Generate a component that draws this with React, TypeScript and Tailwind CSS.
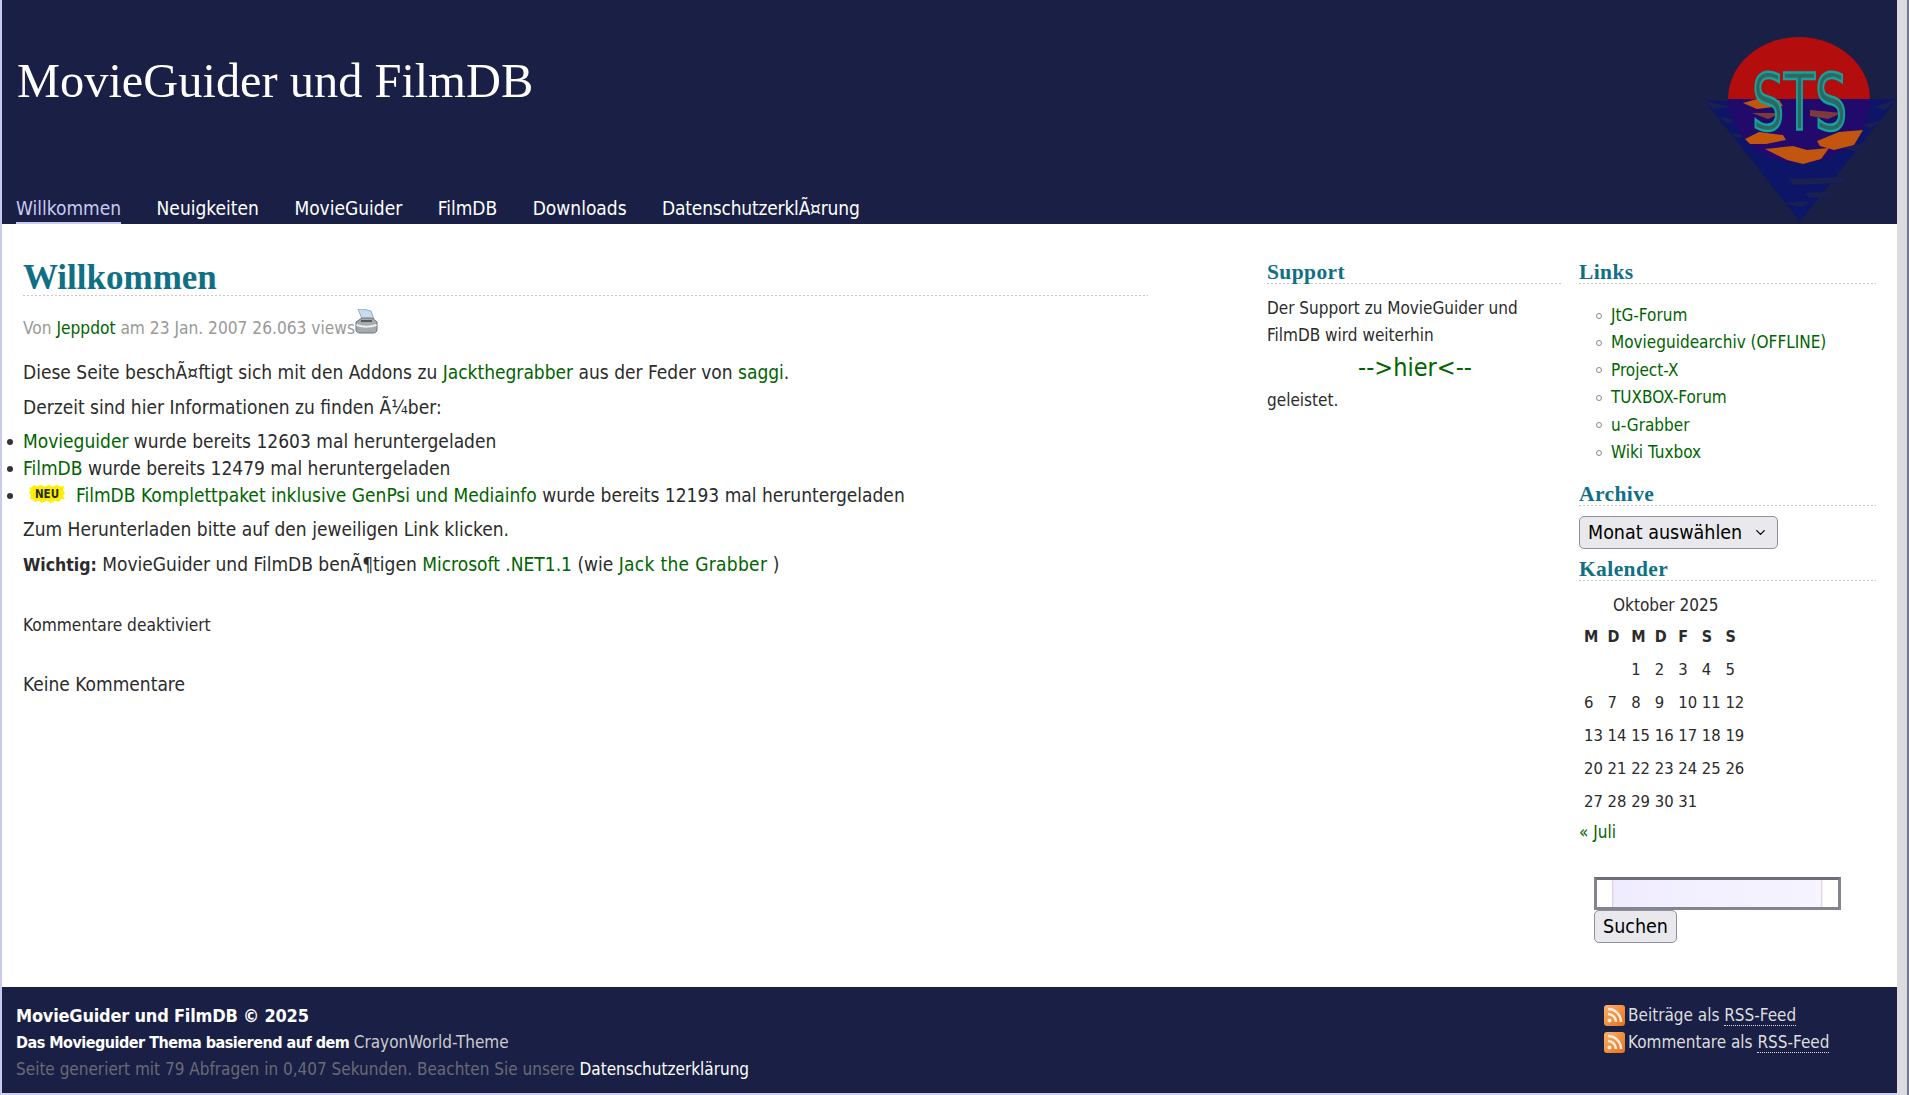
import { ChevronDown } from "lucide-react";

const body = { fontFamily: '"DejaVu Sans", Verdana, sans-serif', fontStretch: "condensed" } as const;

const navItems = ["Willkommen", "Neuigkeiten", "MovieGuider", "FilmDB", "Downloads", "DatenschutzerklÃ¤rung"];
const linkItems = ["JtG-Forum", "Movieguidearchiv (OFFLINE)", "Project-X", "TUXBOX-Forum", "u-Grabber", "Wiki Tuxbox"];
const calendar = [
  ["", "", "1", "2", "3", "4", "5"],
  ["6", "7", "8", "9", "10", "11", "12"],
  ["13", "14", "15", "16", "17", "18", "19"],
  ["20", "21", "22", "23", "24", "25", "26"],
  ["27", "28", "29", "30", "31", "", ""],
];

function Logo() {
  return (
    <svg width="192" height="190" viewBox="0 0 192 190" className="block">
      {/* water triangle, lighter cuts towards the edges */}
      <polygon points="0,68 192,66 100,182 95,188 90,182" fill="#0d1568" />
      <path d="M0 68l26 6-18 2zM14 84l24 3-16 3zM26 100l20 2-14 3zM192 66l-22 8 10 3zM176 88l-20 4 10 3zM160 110l-22 5 12 3zM84 146l60-2-8 6-48 2zM100 160l32-2-8 6-20 1zM78 170l28-2-10 6z" fill="#1a2050" />
      {/* sun */}
      <path d="M23 66a71 62 0 0 1 142 0z" fill="#b30d0d" />
      <path d="M23 66h142c0 12-3 22-9 32-12 18-32 32-62 32-30 0-50-14-60-32-7-10-11-20-11-32z" fill="#22096c" />
      {/* reflections */}
      <path d="M38 70l14-4 22 1 4 6-26 3zM40 106l14-7 24 3 3 5-20 4-16 0zM112 108l22-9 24-2-9 15-20 5-14-4zM60 116l28-3 14 4 22-2-8 11-18 5-16-4-12-6z" fill="#c2560e" />
      <path d="M105 77l32 3-14 6-18-3zM47 80l30 0-14 6z" fill="#7d3a3c" />
      <text x="47" y="97" fontSize="78" fontFamily="'DejaVu Sans'" fill="#2f6765" stroke="#12a39a" strokeWidth="2.600" textLength="95" lengthAdjust="spacingAndGlyphs">STS</text>
    </svg>
  );
}

function Printer() {
  return (
    <svg width="23" height="25" viewBox="0 0 23 25" className="inline-block align-baseline">
      <path d="M3 0h5l8 2 3 8H7z" fill="#c7dcf0" stroke="#7a8ea0" strokeWidth="0.700" />
      <path d="M1 13l6-4h10l5 4v8c0 2-2 3-4 3H5c-2 0-4-1-4-3z" fill="#a6aaae" stroke="#6e7276" />
      <path d="M1.500 16c6 2 14 2 20 0" fill="none" stroke="#eceeef" strokeWidth="2" />
      <path d="M6 12h11" stroke="#4e5155" strokeWidth="1.800" />
    </svg>
  );
}

function NewBadge() {
  return (
    <svg width="36" height="18" viewBox="0 0 36 18" className="mr-[11px] mb-[5px] ml-[6px] inline-block">
      <polygon
        points="0,3 3,2 5,0 8,1.500 12,0 16,1.500 20,0 24,1.500 28,0 31,1.500 35,1 34,5 36,8 34,11 36,14 32,14 30,17 26,15.500 22,18 18,15.500 13,18 10,15.500 6,17 4,14.500 1,14 2,10 0,7 2,5"
        fill="#fcf000"
      />
      <text x="18" y="12.500" textAnchor="middle" fontSize="11.500" fontWeight="700" fill="#2a2a20">NEU</text>
    </svg>
  );
}

function Rss() {
  return (
    <svg width="21" height="21" viewBox="0 0 21 21" className="shrink-0">
      <defs>
        <linearGradient id="rss" x1="0" y1="0" x2="1" y2="1">
          <stop offset="0" stopColor="#fbb26a" />
          <stop offset="1" stopColor="#e8701a" />
        </linearGradient>
      </defs>
      <rect width="21" height="21" rx="3" fill="url(#rss)" />
      <circle cx="5.500" cy="15.500" r="2" fill="#fdeedd" />
      <path d="M4 9a8 8 0 0 1 8 8M4 4a13 13 0 0 1 13 13" fill="none" stroke="#fdeedd" strokeWidth="2.500" />
    </svg>
  );
}

function Dots() {
  return <div className="h-px bg-[linear-gradient(90deg,#c8c8c8_2px,transparent_2px)] bg-[length:4px_1px] bg-repeat-x" />;
}

function WidgetTitle({ children }: { children: React.ReactNode }) {
  return (
    <>
      <h3 className="h-[22px] font-['Liberation_Serif',serif] text-[21.500px] leading-[22px] font-bold tracking-[0.4px] text-[#0f7085]" style={{ fontStretch: "normal" }}>
        {children}
      </h3>
      <Dots />
    </>
  );
}

function A({ children }: { children: React.ReactNode }) {
  return <a className="text-[#006400]">{children}</a>;
}

function Item({ children }: { children: React.ReactNode }) {
  return (
    <li className="flex">
      <span className="flex h-[27px] w-[17px] shrink-0 items-center pl-[1px]">
        <span className="size-[6px] rounded-full bg-[#333]" />
      </span>
      <div>{children}</div>
    </li>
  );
}

function LinkItem({ children }: { children: React.ReactNode }) {
  return (
    <li className="flex h-[27.400px] items-center">
      <span className="mr-[9px] ml-[17px] size-[6px] shrink-0 rounded-full border border-[#888]" />
      <A>{children}</A>
    </li>
  );
}

export default function App() {
  return (
    <div className="flex h-[1095px] w-[1909px] overflow-hidden bg-white text-[#2b2b2b]" style={body}>
      <div className="flex w-[1897px] flex-col border-l-2 border-[#c9c9f2]">
        {/* Header */}
        <header className="relative h-[224px] shrink-0 bg-[#1a1f45] pl-[15px]">
          <h1 className="pt-[50px] font-['Liberation_Serif',serif] text-[48.400px] leading-[62px] text-white" style={{ fontStretch: "normal" }}>
            MovieGuider und FilmDB
          </h1>
          <nav className="absolute bottom-0 left-[14px] flex gap-[35.500px] text-[19px] leading-[26px]">
            {navItems.map((item, i) => (
              <a key={item} className={i === 0 ? "h-[30px] border-b-2 border-[#c9c9f2] pt-[1px] text-[#c9c9f2]" : i === 5 ? "h-[30px] pt-[1px] tracking-[-0.2px] text-white" : "h-[30px] pt-[1px] text-white"}>
                {item}
              </a>
            ))}
          </nav>
          <div className="absolute top-[33px] right-0">
            <Logo />
          </div>
        </header>

        {/* Content */}
        <div className="flex min-h-0 flex-1">
          <main className="w-[1265px] shrink-0 pt-[37px] pl-[21px] text-[19px] leading-[27px]">
            <h2 className="h-[34px] font-['Liberation_Serif',serif] text-[35px] leading-[34px] font-bold text-[#0f7085]" style={{ fontStretch: "normal" }}>
              Willkommen
            </h2>
            <div className="w-[1125px]"><Dots /></div>
            <p className="mt-[13px] h-[34px] text-[17.200px] leading-[32px] text-[#999]">
              Von <A>Jeppdot</A> am 23 Jan. 2007 26.063 views<Printer />
            </p>
            <p className="mt-[16px]">
              Diese Seite beschÃ¤ftigt sich mit den Addons zu <A>Jackthegrabber</A> aus der Feder von <A>saggi</A>.
            </p>
            <p className="mt-[8px]">Derzeit sind hier Informationen zu finden Ã¼ber:</p>
            <ul className="mt-[7px] -ml-[17px]">
              <Item><A>Movieguider</A> wurde bereits 12603 mal heruntergeladen</Item>
              <Item><A>FilmDB</A> wurde bereits 12479 mal heruntergeladen</Item>
              <Item><NewBadge /><A>FilmDB Komplettpaket inklusive GenPsi und Mediainfo</A> wurde bereits 12193 mal heruntergeladen</Item>
            </ul>
            <p className="mt-[7px]">Zum Herunterladen bitte auf den jeweiligen Link klicken.</p>
            <p className="mt-[8px]">
              <b className="text-[17.500px]">Wichtig:</b> MovieGuider und FilmDB benÃ¶tigen <A>Microsoft .NET1.1</A> (wie <span className="tracking-[0.3px]"><A>Jack the Grabber</A></span> )
            </p>
            <p className="mt-[33px] text-[17.200px]">Kommentare deaktiviert</p>
            <p className="mt-[32px]">Keine Kommentare</p>
          </main>

          <aside className="w-[296px] shrink-0 pt-[37px] text-[17px] leading-[27px]">
            <WidgetTitle>Support</WidgetTitle>
            <p className="mt-[11px] w-[270px]">Der Support zu MovieGuider und FilmDB wird weiterhin</p>
            <p className="text-center text-[25px] leading-[38px] text-[#006400]">--&gt;hier&lt;--</p>
            <p>geleistet.</p>
          </aside>

          <aside className="ml-[16px] w-[297px] shrink-0 pt-[37px] text-[17px]">
            <WidgetTitle>Links</WidgetTitle>
            <ul className="mt-[18px]">
              {linkItems.map((item) => (
                <LinkItem key={item}>{item}</LinkItem>
              ))}
            </ul>
            <div className="mt-[17px]"><WidgetTitle>Archive</WidgetTitle></div>
            <div className="relative mt-[10px] h-[33px] w-[199px]">
              <select className="h-[33px] w-[199px] appearance-none rounded-[5px] border border-[#8f8f9d] bg-[#e9e9ed] pl-[8px] text-[19.500px] text-black">
                <option>Monat auswählen</option>
              </select>
              <ChevronDown className="absolute top-[9px] right-[10px] size-[15px] text-black" />
            </div>
            <div className="mt-[9px]"><WidgetTitle>Kalender</WidgetTitle></div>
            <div className="mt-[11px] pl-[34px] leading-[27px]">Oktober 2025</div>
            <div className="mt-[1px] grid w-[170px] grid-cols-7 pl-[5px] leading-[33px]">
              {["M", "D", "M", "D", "F", "S", "S"].map((d, i) => (
                <b key={i} className="text-[16px]">{d}</b>
              ))}
              {calendar.flat().map((d, i) => (
                <span key={i} className="text-[16.500px]">{d || "\u00a0"}</span>
              ))}
            </div>
            <div className="leading-[28px]"><A>« Juli</A></div>
            <div className="mt-[31px] pl-[15px]">
              <input className="block h-[33px] w-[247px] border-[3px] border-[#84848f] border-t-[#6e6e78] bg-[linear-gradient(90deg,#fff_15px,#d9c6dc_15px,#f0ecff_17px,#f6f4ff_224px,#d9c6dc_224px,#fff_226px)]" />
              <button className="block h-[33px] rounded-[5px] border border-[#8f8f9d] bg-[#e9e9ed] px-[8px] text-[19.500px] text-black">Suchen</button>
            </div>
          </aside>
        </div>

        {/* Footer */}
        <footer className="flex h-[106px] shrink-0 justify-between bg-[#1a1f45] pt-[15px] pr-[49px] pl-[14px] text-[17px] leading-[27px] text-[#696a75]">
          <div>
            <div className="text-[18px] font-bold tracking-[-0.2px] text-white">MovieGuider und FilmDB © 2025</div>
            <div className="text-[16px] font-bold tracking-[-0.500px] text-white">Das Movieguider Thema basierend auf dem <span className="text-[17px] font-normal tracking-normal text-[#ccc]">CrayonWorld-Theme</span></div>
            <div>Seite generiert mit 79 Abfragen in 0,407 Sekunden. Beachten Sie unsere <span className="text-white">Datenschutzerklärung</span></div>
          </div>
          <div className="w-[244px] whitespace-nowrap text-[#ddd]">
            <div className="flex h-[27px] items-center gap-[3px]">
              <Rss />
              <span>Beiträge als <span className="border-b border-dotted border-[#ddd]">RSS-Feed</span></span>
            </div>
            <div className="flex h-[27px] items-center gap-[3px]">
              <Rss />
              <span>Kommentare als <span className="border-b border-dotted border-[#ddd]">RSS-Feed</span></span>
            </div>
          </div>
        </footer>
        <div className="h-[2px] shrink-0 bg-[#d0d0f2]" />
      </div>
      <div className="w-[10px] bg-[#dcdce0]" />
      <div className="w-[2px] bg-[#6f7a92]" />
    </div>
  );
}
